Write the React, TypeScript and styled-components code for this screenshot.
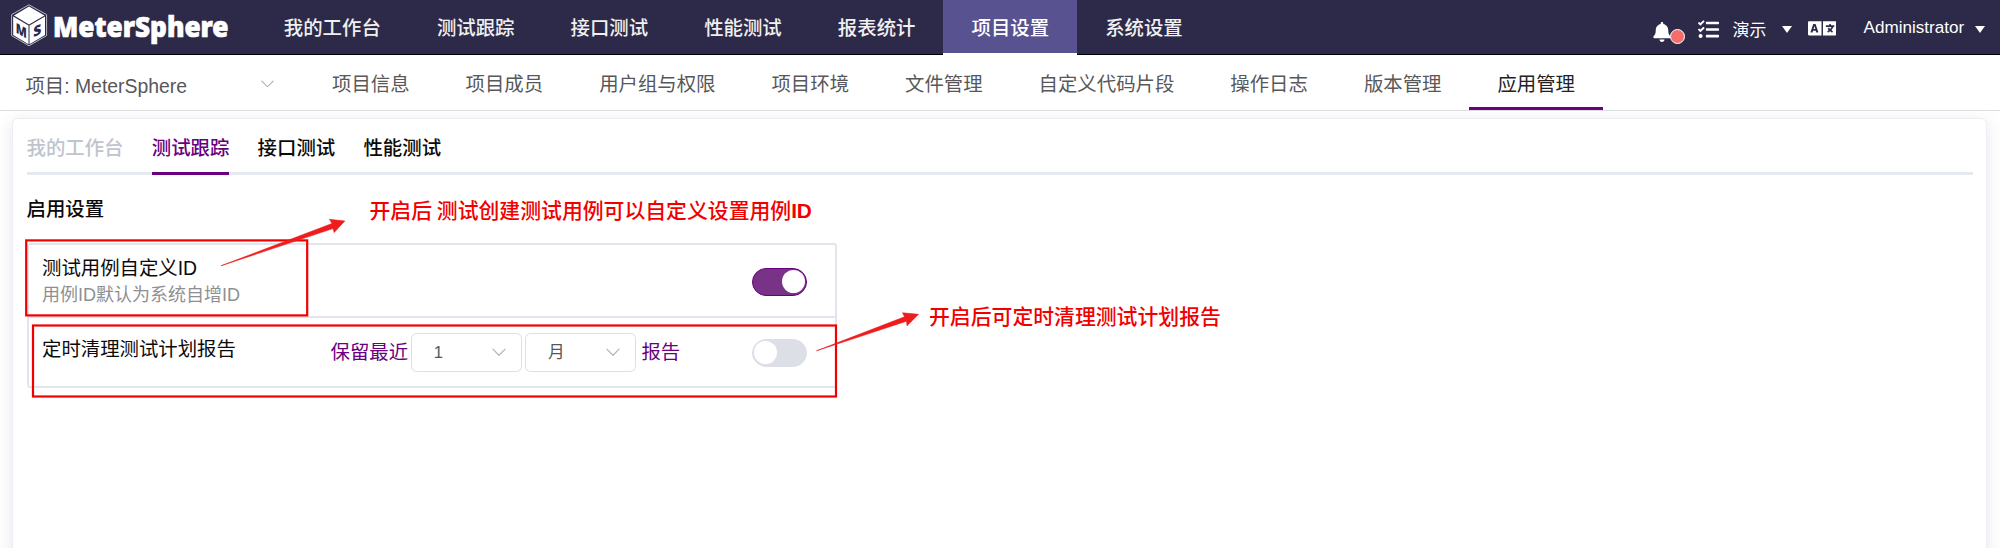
import React from 'react';
import styled, { createGlobalStyle } from 'styled-components';
import { FaBell, FaLanguage, FaTasks } from 'react-icons/fa';

const GlobalStyle = createGlobalStyle`
  * { box-sizing: border-box; }
  html, body { margin: 0; padding: 0; background: #fff; overflow: hidden; }
  body {
    font-family: 'Liberation Sans', 'Noto Sans CJK SC', sans-serif;
    font-size: 19.4px;
    color: #0a0a0a;
    white-space: nowrap;
  }
`;

const PURPLE = '#6a0080';
const RED = '#f20000';

const Page = styled.div`
  position: relative;
  width: 2000px;
  height: 548px;
  overflow: hidden;
  display: flex;
  flex-direction: column;
`;

const Header = styled.header`
  height: 55px;
  flex: none;
  display: flex;
  background: #2d2a49;
  border-bottom: 1px solid #000;
`;

const Brand = styled.div`
  width: 255.8px;
  padding-left: 11px;
  flex: none;
`;

const MainNav = styled.nav`
  display: flex;
  height: 55px;
`;

const MainItem = styled.a<{ $active?: boolean }>`
  height: 55px;
  padding: 0 28.05px;
  line-height: 57px;
  font-weight: 500;
  color: ${(p) => (p.$active ? '#fff' : '#f0f0f0')};
  background: ${(p) => (p.$active ? '#595290' : 'transparent')};
  border-bottom: ${(p) => (p.$active ? '2.5px solid #fff' : 'none')};
`;

const Tools = styled.div`
  margin-left: auto;
  padding-right: 15px;
  display: flex;
  align-items: center;
  height: 56px;
  color: #fff;
  font-size: 16.9px;
`;

const Bell = styled.span`
  position: relative;
  display: flex;
  width: 46.5px;
  padding-top: 8px;
`;

const Dot = styled.i`
  position: absolute;
  left: 18px;
  top: 15px;
  width: 15px;
  height: 15px;
  border-radius: 50%;
  border: 1.5px solid #fff;
  background: #f56c6c;
`;

const TaskIcon = styled.span`
  display: flex;
  width: 34.5px;
  padding-top: 3px;
`;

const Workspace = styled.span`
  width: 49px;
`;

const Caret = styled.i<{ $gap?: number }>`
  border: 5.7px solid transparent;
  border-top: 7.5px solid #fff;
  border-bottom: 0;
  margin-top: 2px;
  margin-right: ${(p) => p.$gap ?? 0}px;
`;

const Lang = styled.span`
  display: flex;
  width: 56px;
`;

const User = styled.span`
  width: 111.5px;
  font-size: 17.1px;
  line-height: 58px;
`;

const SubHeader = styled.div`
  height: 56px;
  flex: none;
  display: flex;
  border-bottom: 1px solid #dfdfe2;
  background: #fff;
`;

const ProjectPicker = styled.div`
  width: 304px;
  padding: 4px 30px 0 25.4px;
  display: flex;
  align-items: center;
  justify-content: space-between;
  color: #57575a;

  svg { margin-top: -2px; }
`;

const SubNav = styled.nav`
  display: flex;
`;

const SubItem = styled.a<{ $active?: boolean }>`
  height: 55px;
  padding: 0 28px;
  line-height: 58.5px;
  color: ${(p) => (p.$active ? '#222225' : '#58585a')};
  border-bottom: ${(p) => (p.$active ? `3px solid ${PURPLE}` : 'none')};
`;

const Body = styled.main`
  flex: 1;
  padding: 7px 13px 0 12px;
  background: #fff;
  overflow: hidden;
`;

const Card = styled.section`
  height: 500px;
  padding: 0 13.5px;
  border: 1.5px solid #ebeef5;
  border-radius: 6px;
  background: #fff;
  box-shadow: 0 3px 17px rgba(0, 0, 0, 0.1);
`;

const Tabs = styled.div`
  display: flex;
  gap: 28.3px;
  height: 56px;
  border-bottom: 3px solid #e6e9f0;
`;

const Tab = styled.button<{ $state?: 'active' | 'disabled' }>`
  height: 56px;
  padding: 0;
  border: 0;
  background: none;
  font: 500 19.4px/58px 'Liberation Sans', 'Noto Sans CJK SC', sans-serif;
  color: ${(p) => (p.$state === 'active' ? PURPLE : p.$state === 'disabled' ? '#c0c4cc' : '#0a0a0a')};
  border-bottom: ${(p) => (p.$state === 'active' ? `3px solid ${PURPLE}` : 'none')};
`;

const SectionTitle = styled.h2`
  margin: 0;
  height: 68px;
  font-size: 19.4px;
  font-weight: 500;
  line-height: 69px;
`;

const Settings = styled.div`
  width: 810px;
  border: 2px solid #e3e5ec;
  border-radius: 3px;
`;

const Row = styled.div`
  height: 70.5px;
  display: flex;
  padding: 0 27.5px 0 13.5px;

  & + & { border-top: 2px solid #e3e5ec; }
`;

const Label = styled.div<{ $top: number }>`
  width: 288.5px;
  padding-top: ${(p) => p.$top}px;
  line-height: 27px;
`;

const Hint = styled.div`
  font-size: 18px;
  line-height: 27px;
  color: #8f8f92;
`;

const Retention = styled.div`
  display: flex;
  height: 39px;
  margin-top: 15.5px;
  line-height: 38px;
  color: ${PURPLE};
`;

const Select = styled.div`
  width: 111px;
  height: 39px;
  margin: 0 0 0 3.2px;
  padding: 0 15.5px 0 21.5px;
  display: flex;
  align-items: center;
  justify-content: space-between;
  border: 1.5px solid #dcdfe6;
  border-radius: 5.5px;
  font-size: 16.7px;
  line-height: 36px;
  color: #55575c;
`;

const Suffix = styled.span`
  margin-left: 5px;
`;

const Switch = styled.span<{ $on?: boolean; $top: number }>`
  width: 55.5px;
  height: 28px;
  margin: ${(p) => p.$top}px 0 0 auto;
  padding: 1.2px;
  display: flex;
  justify-content: ${(p) => (p.$on ? 'flex-end' : 'flex-start')};
  border-radius: 14px;
  border: 1.4px solid ${(p) => (p.$on ? PURPLE : '#dcdfe6')};
  background: ${(p) => (p.$on ? '#783387' : '#dcdfe6')};

  &::after {
    content: '';
    width: 23.2px;
    height: 23.2px;
    border-radius: 50%;
    background: #fff;
  }
`;

const Marks = styled.svg`
  position: absolute;
  left: 0;
  top: 0;
  pointer-events: none;
`;

const Note = styled.p<{ $x: number; $y: number }>`
  position: absolute;
  left: ${(p) => p.$x}px;
  top: ${(p) => p.$y}px;
  margin: 0;
  font-size: 20.85px;
  font-weight: 500;
  line-height: 30px;
  word-spacing: -1px;
  color: ${RED};

  b { letter-spacing: -0.3px; }
`;

const Chevron = ({ w = 13, color = '#b4b7bf' }: { w?: number; color?: string }) => (
  <svg width={w} height={w * 0.6} viewBox="0 0 14 8.4" fill="none" stroke={color} strokeWidth="1.2">
    <path d="M.6.8 7 7.3 13.4.8" />
  </svg>
);

const Logo = () => (
  <svg width="240" height="54" viewBox="11 0 240 54">
    <path d="M29 4.8 46.6 14.6V35.6L29 45.8 11.6 35.6V14.6Z" fill="none" stroke="#b9b8c6" strokeWidth="1" />
    <path d="M29 6.5 44.5 15.4 29 24.6 14 15.4Z" fill="#fff" />
    <path d="M13.2 16.4 28.5 25.6V44.2L13.2 35Z" fill="#fff" />
    <path d="M45 16.4 29.5 25.6V44.2L45 35Z" fill="#fff" />
    <g fill="#2d2a49" fontFamily="Open Sans, sans-serif" fontWeight="800" fontSize="14" textAnchor="middle">
      <text transform="matrix(.82 .46 0 1 21.2 35.6)">M</text>
      <text transform="matrix(1 -.46 0 1 37.3 35.4)">S</text>
    </g>
    <text
      x="53"
      y="37"
      fill="#fff"
      stroke="#fff"
      strokeWidth=".7"
      fontFamily="Noto Sans, sans-serif"
      fontWeight="900"
      fontSize="28"
      textLength="175.5"
      lengthAdjust="spacingAndGlyphs"
    >
      MeterSphere
    </text>
  </svg>
);

const mainItems = ['我的工作台', '测试跟踪', '接口测试', '性能测试', '报表统计', '项目设置', '系统设置'];
const subItems = ['项目信息', '项目成员', '用户组与权限', '项目环境', '文件管理', '自定义代码片段', '操作日志', '版本管理', '应用管理'];

export default function App() {
  return (
    <Page>
      <GlobalStyle />
      <Header>
        <Brand><Logo /></Brand>
        <MainNav>
          {mainItems.map((t) => <MainItem key={t} $active={t === '项目设置'}>{t}</MainItem>)}
        </MainNav>
        <Tools>
          <Bell><FaBell size={20} /><Dot /></Bell>
          <TaskIcon><FaTasks size={21} /></TaskIcon>
          <Workspace>演示</Workspace>
          <Caret $gap={16} />
          <Lang><FaLanguage size={28.5} /></Lang>
          <User>Administrator</User>
          <Caret />
        </Tools>
      </Header>
      <SubHeader>
        <ProjectPicker>
          <span>项目: MeterSphere</span>
          <Chevron />
        </ProjectPicker>
        <SubNav>
          {subItems.map((t) => <SubItem key={t} $active={t === '应用管理'}>{t}</SubItem>)}
        </SubNav>
      </SubHeader>
      <Body>
        <Card>
          <Tabs>
            <Tab $state="disabled">我的工作台</Tab>
            <Tab $state="active">测试跟踪</Tab>
            <Tab>接口测试</Tab>
            <Tab>性能测试</Tab>
          </Tabs>
          <SectionTitle>启用设置</SectionTitle>
          <Settings>
            <Row>
              <Label $top={9.5}>
                测试用例自定义ID
                <Hint>用例ID默认为系统自增ID</Hint>
              </Label>
              <Switch $on $top={22.5} />
            </Row>
            <Row>
              <Label $top={18.5}>定时清理测试计划报告</Label>
              <Retention>
                保留最近
                <Select>1<Chevron w={14} /></Select>
                <Select>月<Chevron w={14} /></Select>
                <Suffix>报告</Suffix>
              </Retention>
              <Switch $top={21.5} />
            </Row>
          </Settings>
        </Card>
      </Body>
      <Marks width="2000" height="548">
        <g fill="none" stroke={RED} strokeWidth="2.2">
          <rect x="26.2" y="240.4" width="281" height="75" />
          <rect x="33" y="325.5" width="803" height="71" />
        </g>
        <g fill="#ee1c1c" stroke="#ee1c1c" strokeWidth=".6">
          <path d="M221 265.8 332 223.5 329.5 219.3 344.8 221 334.2 232.5 333 228.6Z" />
          <path d="M816.5 350.8 904.5 316.8 902.5 312.8 918.5 314.3 907 325.8 906.5 321.2Z" />
        </g>
      </Marks>
      <Note $x={369.5} $y={196}>开启后 测试创建测试用例可以自定义设置用例<b>ID</b></Note>
      <Note $x={929} $y={302}>开启后可定时清理测试计划报告</Note>
    </Page>
  );
}
